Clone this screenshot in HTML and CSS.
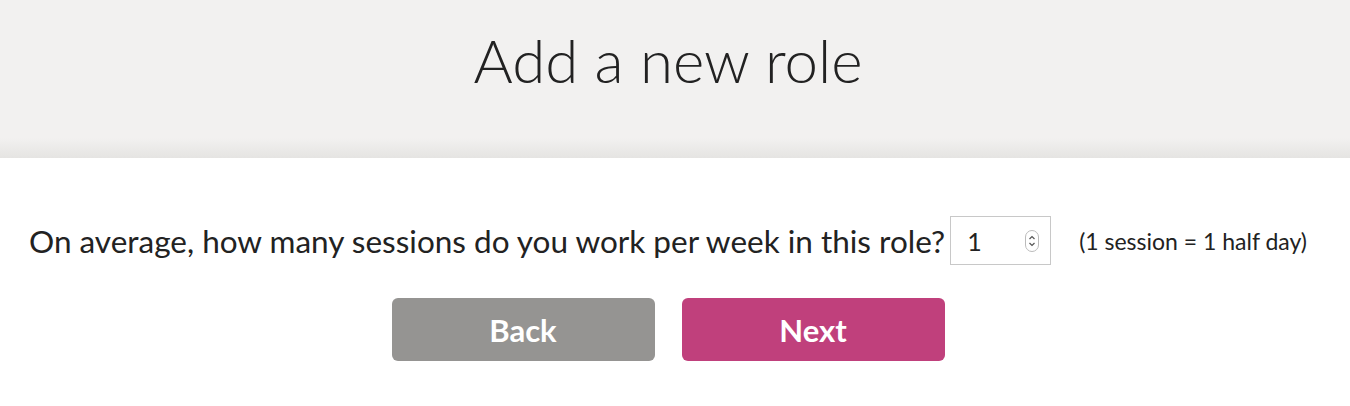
FILE: index.html
```html
<!DOCTYPE html>
<html lang="en">
<head>
    <meta charset="UTF-8">
    <title>Add a new role</title>
    <link rel="stylesheet" href="styles.css">
</head>
<body>
    <header class="banner">
        <h1>Add a new role</h1>
    </header>
    <main class="form">
        <div class="question">
            <label for="sessions">On average, how many sessions do you work per week in this role?</label>
            <div class="number-box">
                <input id="sessions" type="text" value="1">
                <svg class="spinner" width="14" height="22" viewBox="0 0 14 22">
                    <rect x="0.5" y="0.5" width="13" height="21" rx="6.5" fill="#fff" stroke="#bbb"/>
                    <path d="M4.5 9 L7 6.5 L9.5 9" fill="none" stroke="#555" stroke-width="1.2"/>
                    <path d="M4.5 13 L7 15.5 L9.5 13" fill="none" stroke="#555" stroke-width="1.2"/>
                </svg>
            </div>
            <span class="hint">(1 session = 1 half day)</span>
        </div>
        <div class="actions">
            <button class="btn btn-back">Back</button>
            <button class="btn btn-next">Next</button>
        </div>
    </main>
</body>
</html>
```

FILE: styles.css
```css
body {
    margin: 0;
    background-color: #fff;
    color: #222;
    font-family: Lato, "Open Sans", sans-serif;
}
.banner {
    height: 158px;
    padding-right: 14px;
    box-sizing: border-box;
    background: linear-gradient(to bottom, #f2f1f0 0, #f2f1f0 138px, #e5e4e2 158px);
    display: flex;
    justify-content: center;
}
.banner h1 {
    margin: 0;
    padding-top: 20px;
    font-size: 60px;
    font-weight: 300;
    line-height: 80px;
}
.form {
    padding-top: 58px;
    padding-right: 14px;
    display: flex;
    flex-direction: column;
    align-items: center;
}
.question {
    display: flex;
    align-items: center;
    font-size: 31.5px;
}
.question label {
    margin-right: 5px;
}
.number-box {
    width: 87px;
    height: 47px;
    border: 1px solid #c8c8c8;
    display: flex;
    align-items: center;
    padding-right: 12px;
}
.number-box input {
    border: none;
    outline: none;
    width: 58px;
    padding: 0 0 0 16px;
    font-family: Lato, sans-serif;
    font-size: 25px;
    color: #222;
    background: transparent;
}
.spinner {
    flex: none;
}
.hint {
    margin-left: 28px;
    font-size: 23px;
}
.actions {
    margin-top: 33px;
    display: flex;
    gap: 27px;
}
.btn {
    width: 263px;
    height: 63px;
    border: none;
    border-radius: 6px;
    color: #fff;
    font-family: Lato, sans-serif;
    font-weight: bold;
    font-size: 31px;
    cursor: pointer;
}
.btn-back {
    background-color: #959492;
}
.btn-next {
    background-color: #c0407c;
}
```
